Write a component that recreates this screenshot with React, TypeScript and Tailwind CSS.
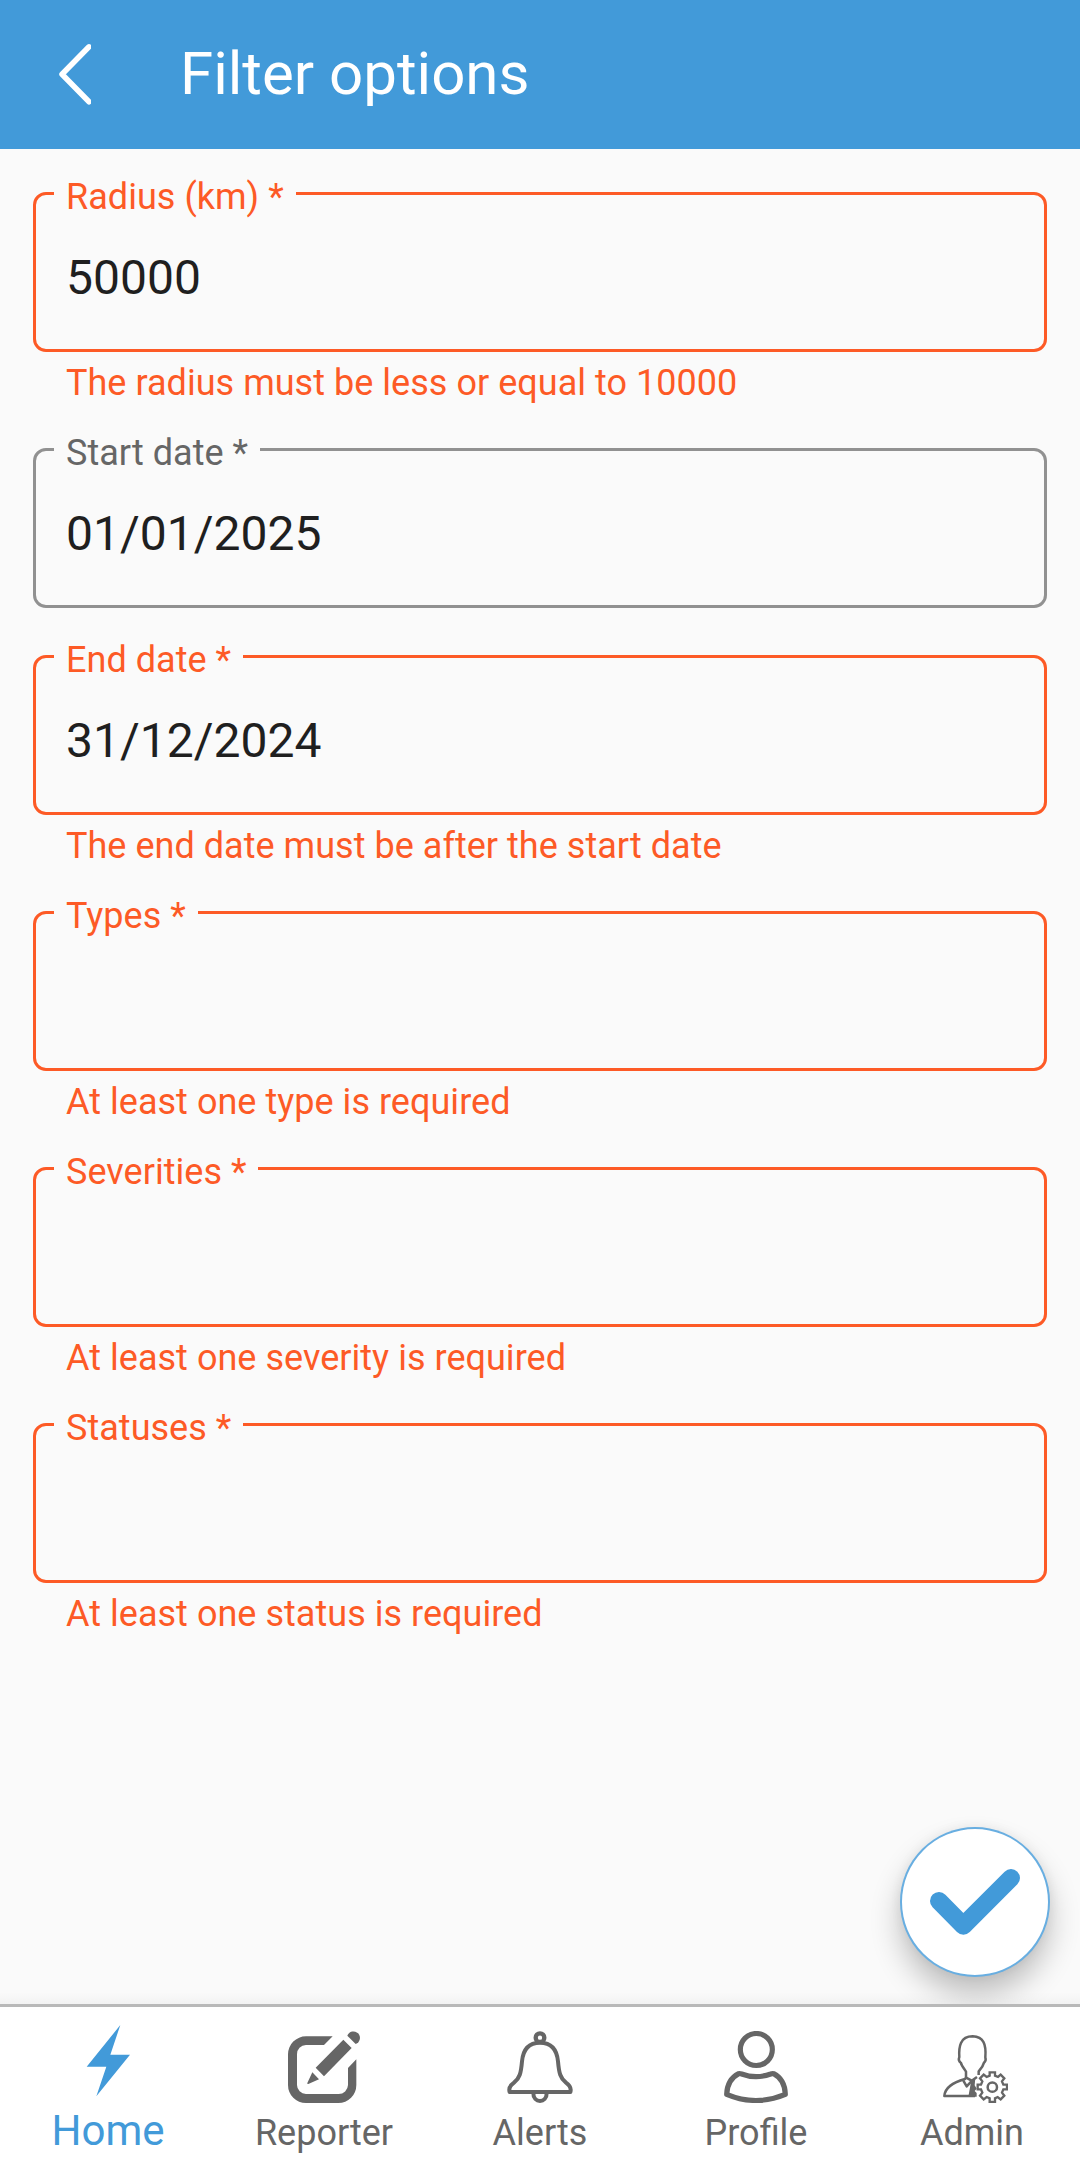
import type { ReactNode } from "react";

type FieldData = { label: string; value?: string; error?: string };

const fields: FieldData[] = [
  { label: "Radius (km) *", value: "50000", error: "The radius must be less or equal to 10000" },
  { label: "Start date *", value: "01/01/2025" },
  { label: "End date *", value: "31/12/2024", error: "The end date must be after the start date" },
  { label: "Types *", error: "At least one type is required" },
  { label: "Severities *", error: "At least one severity is required" },
  { label: "Statuses *", error: "At least one status is required" },
];

function Field({ label, value, error }: FieldData) {
  return (
    <div className={error ? "h-[256px]" : "h-[207px]"}>
      <div
        className={
          "relative flex h-[160px] items-center rounded-[13px] border-[3px] px-[30px] pt-[12px] " +
          (error ? "border-[#fd5a26]" : "border-[#919191]")
        }
      >
        <span
          className={
            "absolute -top-[19px] left-[18px] bg-[#fafafa] px-[12px] text-[36px] leading-[42px] tracking-[0.03px] whitespace-nowrap " +
            (error ? "text-[#fd5a26]" : "text-[#666666]")
          }
        >
          {label}
        </span>
        <span className="text-[48px] leading-[56px] text-[#1f1f1f]">{value}</span>
      </div>
      {error && (
        <p className="pt-[10px] pl-[33px] text-[36px] leading-[42px] tracking-[0.03px] text-[#fd5a26]">{error}</p>
      )}
    </div>
  );
}

function Tab({ label, active, children }: { label: string; active?: boolean; children: ReactNode }) {
  return (
    <a
      className={
        "flex flex-1 flex-col items-center pt-[24px] " + (active ? "text-[#429ad9]" : "text-[#666666]")
      }
    >
      {children}
      <span
        className={
          active ? "mt-[3px] text-[42px] leading-[50px]" : "mt-[9px] text-[36px] leading-[42px]"
        }
      >
        {label}
      </span>
    </a>
  );
}

export default function App() {
  return (
    <div className="flex h-[2175px] w-[1080px] flex-col overflow-hidden bg-[#fafafa] font-[Roboto,sans-serif]">
      <header className="flex h-[149px] items-center bg-[#429ad9] pl-[57px] text-white">
        <svg className="h-[64px] w-[34px]" viewBox="57 42.5 34 64" fill="none" stroke="currentColor" strokeWidth="5.5" strokeLinecap="round" strokeLinejoin="round">
          <path d="M89 46.300L62 73.800L89 101.300" />
        </svg>
        <h1 className="ml-[89px] pb-[2px] text-[60px] leading-[72px]">Filter options</h1>
      </header>

      <main className="relative flex-1 overflow-hidden px-[33px] pt-[43px]">
        {fields.map((f) => (
          <Field key={f.label} {...f} />
        ))}
        <button className="absolute right-[30px] bottom-[27px] flex size-[150px] items-center justify-center rounded-full border-2 border-[#429ad9]/80 bg-white shadow-[0_18px_30px_rgba(0,0,0,0.24),0_0_12px_rgba(0,0,0,0.06)]">
          <svg className="size-[146px]" viewBox="902 1829 146 146" fill="none" stroke="#429ad9" strokeWidth="18" strokeLinecap="round" strokeLinejoin="round">
            <path d="M939 1901L963.4 1925.7L1011 1878" />
          </svg>
        </button>
        <div className="absolute inset-x-0 bottom-0 h-[12px] bg-linear-to-b from-transparent to-black/3" />
      </main>

      <nav className="flex h-[171px] border-t-[3px] border-[#b9b9b9] bg-white">
        <Tab label="Home" active>
          <svg className="size-[72px]" viewBox="216 123 216 216" overflow="visible" fill="currentColor">
            <path d="M361 105L331 194H390L289 319L319 230H260Z" />
          </svg>
        </Tab>
        <Tab label="Reporter">
          <svg className="size-[72px]" viewBox="204 123 216 216" fill="currentColor">
            <path d="M338 139H258a54 54 0 0 0-54 54V285a54 54 0 0 0 54 54H355a54 54 0 0 0 54-54V208L384 234V285a28 28 0 0 1-28 27H258a27 27 0 0 1-27-27V193a27 27 0 0 1 27-28H312Z" />
            <path d="M370 149L395 174L312 259L287 233ZM277 247L297 268L265 282Q261 283 262 279Z" />
            <path d="M382 137A19.500 19.500 0 1 1 407 162Z" />
          </svg>
        </Tab>
        <Tab label="Alerts">
          <svg className="size-[72px]" viewBox="192 123 216 216" fill="none" stroke="currentColor" strokeWidth="12" strokeLinejoin="round">
            <circle cx="300" cy="143" r="13" strokeWidth="13" />
            <path d="M300 158C264 158 249 181 246 214C243 249 239 265 222 278C211 286 205 294 209 306H391C395 294 389 286 378 278C361 265 357 249 354 214C351 181 336 158 300 158Z" />
            <path d="M280 309C279 341 321 341 320 309" />
          </svg>
        </Tab>
        <Tab label="Profile">
          <svg className="size-[72px]" viewBox="210 123 216 216" fill="none" stroke="currentColor" strokeWidth="15.500" strokeLinejoin="round">
            <circle cx="319" cy="178.500" r="48" />
            <path d="M230 313C231 287 241 264 266 251Q269 250 275 252Q318 268 362 252Q367 250 371 251C396 264 405 287 406 313Q318 350 230 313Z" />
          </svg>
        </Tab>
        <Tab label="Admin">
          <svg className="size-[72px]" viewBox="198 123 216 216" fill="none" stroke="currentColor" strokeWidth="7.500" strokeLinejoin="round">
            <path d="M315 318H223C225 292 247 278 285 267L288 262V245C281 234 274 226 273 219C266 214 266 206 268 201C266 171 270 139 308 139C341 141 349 162 346 202C348 208 347 214 342 218C339 230 333 236 326 244V255" />
            <path d="M287 262L305 272L321 261M280 272L290 289L304 274" />
            <path d="M316 264L303 276L295 320H320V309L314 303L320 296L314 286Z" fill="currentColor" stroke="none" />
            <path
              d="M359 247H375V257L384 261L392 254L403 265L396 274L400 284H411V298H400L396 308L403 317L392 328L383 321L375 325V336H359V325L350 321L341 328L330 317L337 308L333 298H323V284H333L337 274L330 265L341 254L350 261L359 257Z"
              strokeWidth="7"
              strokeLinejoin="miter"
            />
            <circle cx="367" cy="291.500" r="14" />
          </svg>
        </Tab>
      </nav>
    </div>
  );
}
